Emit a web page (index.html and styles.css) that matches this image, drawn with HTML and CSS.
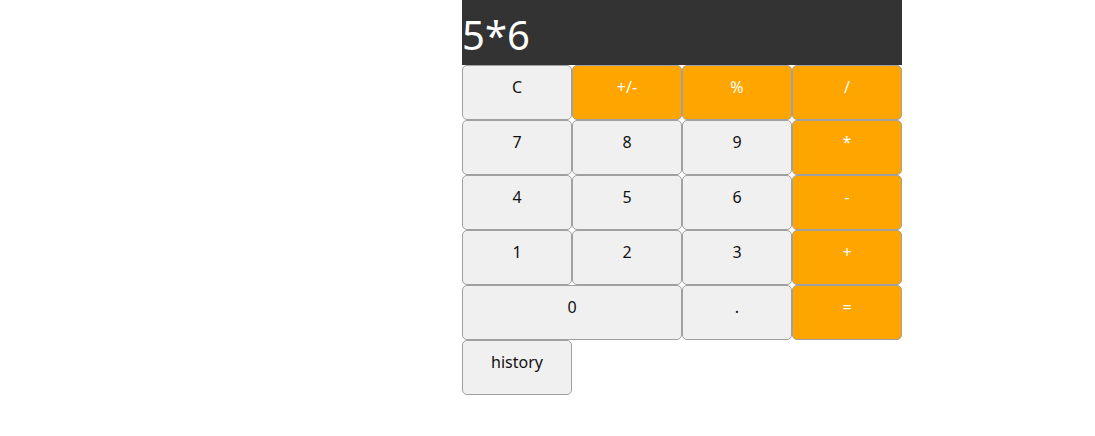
FILE: index.html
```html
<!DOCTYPE html>
<html>
<head>
<meta charset="utf-8">
<link rel="stylesheet" href="styles.css">
</head>
<body>
<div class="calc">
  <div class="display">5*6</div>
  <div class="keys">
    <button class="key">C</button>
    <button class="key op">+/-</button>
    <button class="key op">%</button>
    <button class="key op">/</button>
    <button class="key">7</button>
    <button class="key">8</button>
    <button class="key">9</button>
    <button class="key op">*</button>
    <button class="key">4</button>
    <button class="key">5</button>
    <button class="key">6</button>
    <button class="key op">-</button>
    <button class="key">1</button>
    <button class="key">2</button>
    <button class="key">3</button>
    <button class="key op">+</button>
    <button class="key wide">0</button>
    <button class="key">.</button>
    <button class="key op">=</button>
    <button class="key">history</button>
  </div>
</div>
</body>
</html>
```
FILE: styles.css
```css
html, body {
  margin: 0;
  padding: 0;
  background: #fff;
}
.calc {
  margin-left: 462px;
  width: 440px;
  font-family: "Noto Sans", "Open Sans", sans-serif;
}
.display {
  height: 65px;
  background: #333333;
  color: #fff;
  font-size: 40px;
  line-height: 70px;
  box-sizing: border-box;
  white-space: nowrap;
  overflow: hidden;
}
.keys {
  display: grid;
  grid-template-columns: repeat(4, 110px);
  grid-auto-rows: 55px;
}
.key {
  box-sizing: border-box;
  height: 55px;
  margin: 0;
  padding: 10px 0 0 0;
  display: flex;
  justify-content: center;
  align-items: flex-start;
  border: 1px solid #a0a0a0;
  border-radius: 5px;
  background: #f0f0f0;
  color: #111;
  font-family: "Noto Sans", "Open Sans", sans-serif;
  font-size: 16px;
  line-height: 22px;
}
.key.op {
  background: #ffa500;
  color: #fff;
}
.key.wide {
  grid-column: span 2;
}
```
